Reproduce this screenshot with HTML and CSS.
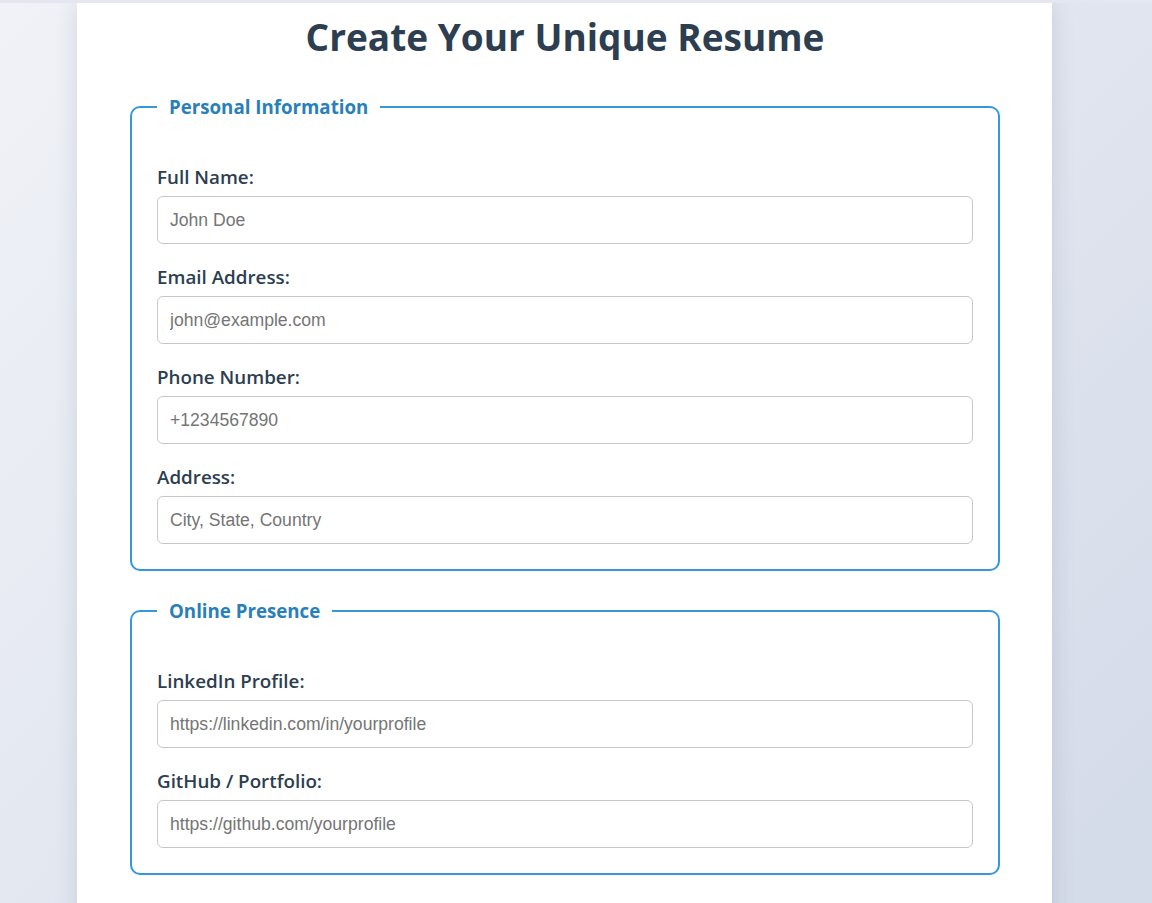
FILE: index.html
```html
<!DOCTYPE html>
<html lang="en">
<head>
<meta charset="UTF-8">
<title>Create Your Unique Resume</title>
<link rel="stylesheet" href="styles.css">
</head>
<body>
<div class="container">
  <h1 class="title">Create Your Unique Resume</h1>
  <form class="resume-form">
    <fieldset class="section">
      <legend class="section-title">Personal Information</legend>
      <div class="fields">
        <div class="field">
          <label class="field-label" for="name">Full Name:</label>
          <input class="field-input" id="name" type="text" placeholder="John Doe">
        </div>
        <div class="field">
          <label class="field-label" for="email">Email Address:</label>
          <input class="field-input" id="email" type="email" placeholder="john@example.com">
        </div>
        <div class="field">
          <label class="field-label" for="phone">Phone Number:</label>
          <input class="field-input" id="phone" type="tel" placeholder="+1234567890">
        </div>
        <div class="field">
          <label class="field-label" for="address">Address:</label>
          <input class="field-input" id="address" type="text" placeholder="City, State, Country">
        </div>
      </div>
    </fieldset>
    <fieldset class="section">
      <legend class="section-title">Online Presence</legend>
      <div class="fields">
        <div class="field">
          <label class="field-label" for="linkedin">LinkedIn Profile:</label>
          <input class="field-input" id="linkedin" type="url" placeholder="https://linkedin.com/in/yourprofile">
        </div>
        <div class="field">
          <label class="field-label" for="github">GitHub / Portfolio:</label>
          <input class="field-input" id="github" type="url" placeholder="https://github.com/yourprofile">
        </div>
      </div>
    </fieldset>
  </form>
</div>
</body>
</html>
```

FILE: styles.css
```css
* { box-sizing: border-box; }

html {
  background: linear-gradient(135deg, #f0f2f7 0%, #d3dae8 100%);
  min-height: 100%;
}

body {
  margin: 0;
  border-top: 3px solid #e4e6f0;
  font-family: "Open Sans", "Noto Sans", sans-serif;
  color: #2c3e50;
}

.container {
  width: 975px;
  margin-left: 77px;
  background: #ffffff;
  padding: 12px 52px 40px 53px;
  box-shadow: 0 0 22px rgba(40, 60, 100, 0.14);
}

.title {
  margin: 0 0 35px;
  text-align: center;
  font-size: 37px;
  line-height: 1.2;
  font-weight: 700;
  color: #2c3e50;
}

.section {
  margin: 0 0 27px;
  padding: 46px 25px 25px;
  border: 2px solid #3498db;
  border-radius: 10px;
}

.section-title {
  padding: 0 12px;
  font-size: 18.7px;
  font-weight: 700;
  color: #2980b9;
}

.fields {
  display: flex;
  flex-direction: column;
  gap: 21px;
}

.field-label {
  display: block;
  margin-bottom: 7px;
  font-size: 18.8px;
  line-height: 24px;
  font-weight: 600;
  color: #2c3e50;
}

.field-input {
  display: block;
  width: 100%;
  height: 48px;
  padding: 0 12px;
  border: 1px solid #c8c8c8;
  border-radius: 6px;
  font-family: "Liberation Sans", Arial, sans-serif;
  font-size: 17.6px;
  color: #333;
  background: #fff;
}

.field-input::placeholder {
  color: #757575;
}
```
